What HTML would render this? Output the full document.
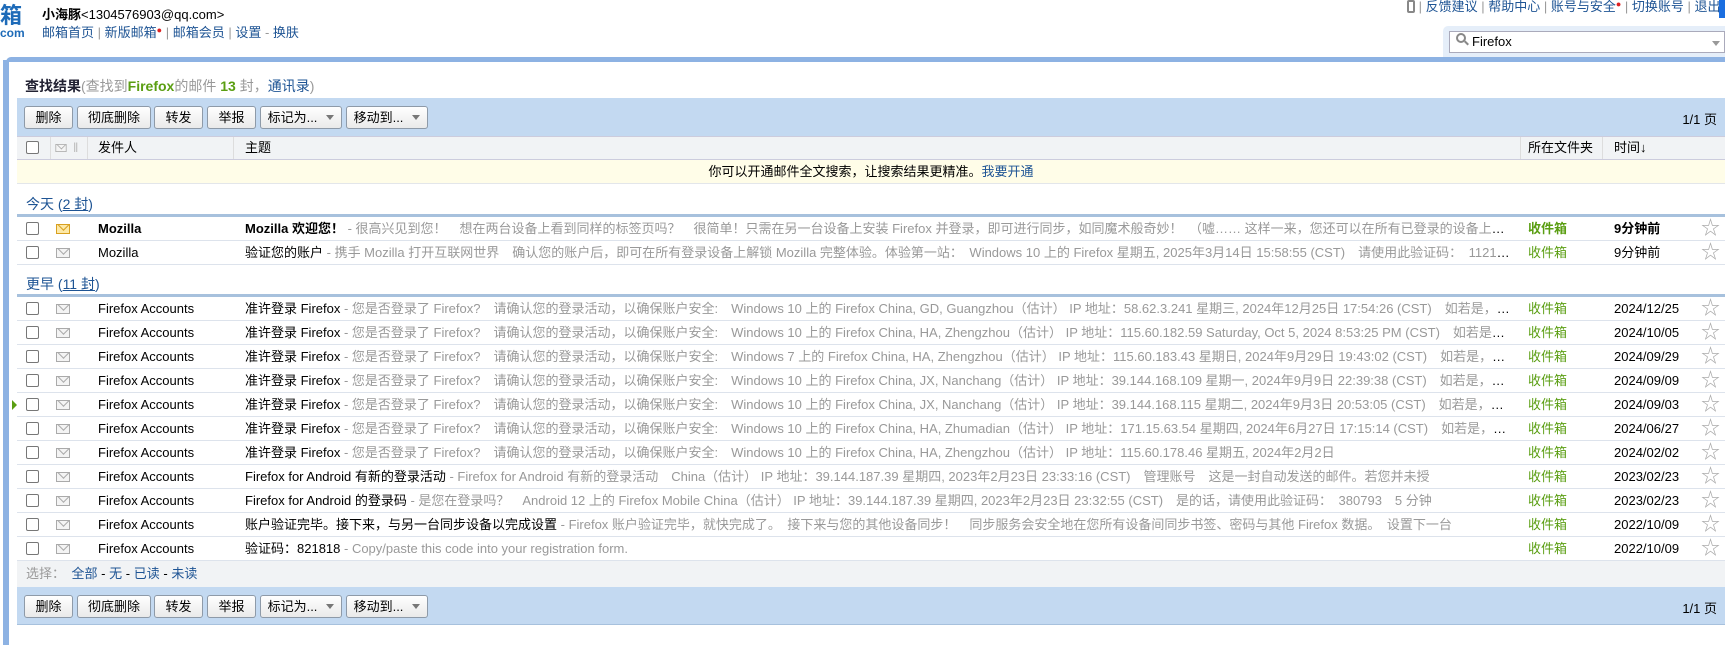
<!DOCTYPE html>
<html><head><meta charset="utf-8"><style>
*{margin:0;padding:0;box-sizing:border-box}
body{width:1725px;height:645px;overflow:hidden;background:#fff;font-family:"Liberation Sans","Noto Sans CJK SC",sans-serif;font-size:13px;color:#000;position:relative}
.a{position:absolute;white-space:nowrap}
a{color:#1e5494;text-decoration:none}
.tb{position:absolute;left:17px;right:0;height:38px;background:#c3d9f1}
.btn{position:absolute;top:8px;height:23px;border:1px solid #8e9aa8;border-radius:3px;background:linear-gradient(#fff,#eaeaea);font-size:13px;line-height:21px;text-align:center;color:#000}
.btn i{display:inline-block;width:0;height:0;border-left:4px solid transparent;border-right:4px solid transparent;border-top:5px solid #777;margin-left:9px;vertical-align:2px}
.row{position:absolute;left:17px;right:0;height:24px;border-bottom:1px solid #dde3ec;line-height:23px;white-space:nowrap}
.cb{position:absolute;left:9px;top:5px;width:13px;height:13px;border:1px solid #777;border-radius:2px;background:#fff}
.env{position:absolute;left:39px;top:7px;width:14px;height:10px;border:1px solid #aaa;background:#f4f4f4;overflow:hidden}
.env:after{content:"";position:absolute;left:2px;top:-5px;width:8px;height:8px;border-right:1px solid #aaa;border-bottom:1px solid #aaa;transform:rotate(45deg)}
.env.n{border-color:#d8a020;background:#fde9a8}
.env.n:after{border-color:#d8a020}
.snd{position:absolute;left:81px}
.sub{position:absolute;left:228px;width:1270px;overflow:hidden;text-overflow:ellipsis}
.sub span{color:#999}
.fld{position:absolute;left:1511px;color:#5a9e12}
.tm{position:absolute;left:1597px}
.st{position:absolute;left:1684px;color:#aaa;font-size:19px;top:0}
.b{font-weight:bold}
.grp{position:absolute;left:26px;font-size:14px;color:#1e5494}
.gl{position:absolute;left:17px;right:0;height:3px;background:#a7c1dd}
</style></head><body>
<div class="a b" style="left:0;top:4px;font-size:22px;color:#1e6bb8;line-height:24px">箱</div>
<div class="a b" style="left:0;top:26px;font-size:12px;color:#1e6bb8">com</div>
<div class="a" style="left:42px;top:4px"><b>小海豚</b>&lt;1304576903@qq.com&gt;</div>
<div class="a" style="left:42px;top:22px;color:#999"><a>邮箱首页</a> | <a>新版邮箱</a><span style="color:#d22;font-size:9px;vertical-align:4px">●</span> | <a>邮箱会员</a> | <a>设置</a> - <a>换肤</a></div>
<div class="a" style="left:1407px;top:-4px;color:#999;font-size:13px"><span style="display:inline-block;width:8px;height:13px;border:2px solid #888;border-radius:2px;vertical-align:-2px"></span> | <a>反馈建议</a> | <a>帮助中心</a> | <a>账号与安全</a><span style="color:#d22;font-size:9px;vertical-align:4px">●</span> | <a>切换账号</a> | <a>退出</a></div>
<div class="a" style="left:1719px;top:0;width:6px;height:18px;background:#1a6ee0"></div>
<div class="a" style="left:1443px;top:26px;width:282px;height:32px;background:#e5eef9;border-radius:5px 0 0 0"></div>
<div class="a" style="left:1449px;top:31px;width:276px;height:22px;background:#fff;border:1px solid #aab"></div>
<div class="a" style="left:1456px;top:33px;width:10px;height:10px;border:2px solid #888;border-radius:50%"></div>
<div class="a" style="left:1464px;top:42px;width:5px;height:2px;background:#888;transform:rotate(45deg)"></div>
<div class="a" style="left:1472px;top:34px;font-size:13px">Firefox</div>
<div class="a" style="left:1712px;top:41px;border-left:4px solid transparent;border-right:4px solid transparent;border-top:5px solid #999"></div>
<div class="a" style="left:6px;top:57px;right:0;height:5px;background:#8db2e3;border-radius:6px 0 0 0"></div>
<div class="a" style="left:3px;top:60px;width:6px;height:585px;background:#8db2e3"></div>
<div class="a" style="left:25px;top:76px;font-size:14px"><b style="color:#223">查找结果</b><span style="color:#999">(查找到<b style="color:#5a9e12">Firefox</b>的邮件 <b style="color:#5a9e12">13</b> 封，<a>通讯录</a>)</span></div>
<div class="tb" style="top:98px">
<div class="btn" style="left:7px;width:49px">删除</div>
<div class="btn" style="left:60px;width:74px">彻底删除</div>
<div class="btn" style="left:137px;width:49px">转发</div>
<div class="btn" style="left:190px;width:49px">举报</div>
<div class="btn" style="left:243px;width:82px">标记为...<i></i></div>
<div class="btn" style="left:329px;width:82px">移动到...<i></i></div>
<div class="a" style="right:8px;top:11px">1/1 页</div>
</div>
<div class="a" style="left:17px;right:0;top:136px;height:24px;background:#f1f3f5;border-top:1px solid #ccd;border-bottom:1px solid #ccd;line-height:22px">
<div class="cb" style="top:4px"></div>
<div class="a" style="left:33px;top:0;height:22px;border-left:1px solid #ddd"></div>
<div class="env" style="top:6px;transform:scale(.8);left:37px"></div><div class="a" style="left:56px;color:#bbb">‖</div>
<div class="a" style="left:70px;top:0;height:22px;border-left:1px solid #ddd"></div>
<div class="snd">发件人</div>
<div class="a" style="left:216px;top:0;height:22px;border-left:1px solid #ddd"></div>
<div class="sub">主题</div>
<div class="a" style="left:1503px;top:0;height:22px;border-left:1px solid #ddd"></div>
<div class="fld" style="color:#000">所在文件夹</div>
<div class="a" style="left:1585px;top:0;height:22px;border-left:1px solid #ddd"></div>
<div class="tm">时间↓</div>
</div>
<div class="a" style="left:17px;right:0;top:160px;height:24px;background:#fffde8;border-bottom:1px solid #e3e6ea;text-align:center;line-height:23px">你可以开通邮件全文搜索，让搜索结果更精准。<a>我要开通</a></div>
<div class="grp" style="top:194px">今天 (<u>2 封</u>)</div>
<div class="gl" style="top:214px"></div>
<div class="row" style="top:217px"><div class="cb"></div><div class="env n"></div><div class="snd b">Mozilla</div><div class="sub"><b>Mozilla 欢迎您！</b><span> - 很高兴见到您！　想在两台设备上看到同样的标签页吗？　很简单！只需在另一台设备上安装 Firefox 并登录，即可进行同步，如同魔术般奇妙！　（嘘…… 这样一来，您还可以在所有已登录的设备上获取书签、密码和其他数据）</span></div><div class="fld b">收件箱</div><div class="tm b">9分钟前</div><div class="st">☆</div></div>
<div class="row" style="top:241px"><div class="cb"></div><div class="env"></div><div class="snd">Mozilla</div><div class="sub">验证您的账户<span> - 携手 Mozilla 打开互联网世界　确认您的账户后，即可在所有登录设备上解锁 Mozilla 完整体验。体验第一站：　Windows 10 上的 Firefox 星期五, 2025年3月14日 15:58:55 (CST)　请使用此验证码：　112147　...</span></div><div class="fld">收件箱</div><div class="tm">9分钟前</div><div class="st">☆</div></div>
<div class="grp" style="top:274px">更早 (<u>11 封</u>)</div>
<div class="gl" style="top:294px"></div>
<div class="row" style="top:297px"><div class="cb"></div><div class="env"></div><div class="snd">Firefox Accounts</div><div class="sub">准许登录 Firefox<span> - 您是否登录了 Firefox?　请确认您的登录活动，以确保账户安全:　Windows 10 上的 Firefox China, GD, Guangzhou（估计）  IP 地址：58.62.3.241 星期三, 2024年12月25日 17:54:26 (CST)　如若是，请忽略此邮件</span></div><div class="fld">收件箱</div><div class="tm">2024/12/25</div><div class="st">☆</div></div>
<div class="row" style="top:321px"><div class="cb"></div><div class="env"></div><div class="snd">Firefox Accounts</div><div class="sub">准许登录 Firefox<span> - 您是否登录了 Firefox?　请确认您的登录活动，以确保账户安全:　Windows 10 上的 Firefox China, HA, Zhengzhou（估计）  IP 地址：115.60.182.59 Saturday, Oct 5, 2024 8:53:25 PM (CST)　如若是，请忽略</span></div><div class="fld">收件箱</div><div class="tm">2024/10/05</div><div class="st">☆</div></div>
<div class="row" style="top:345px"><div class="cb"></div><div class="env"></div><div class="snd">Firefox Accounts</div><div class="sub">准许登录 Firefox<span> - 您是否登录了 Firefox?　请确认您的登录活动，以确保账户安全:　Windows 7 上的 Firefox China, HA, Zhengzhou（估计）  IP 地址：115.60.183.43 星期日, 2024年9月29日 19:43:02 (CST)　如若是，请忽略此邮件</span></div><div class="fld">收件箱</div><div class="tm">2024/09/29</div><div class="st">☆</div></div>
<div class="row" style="top:369px"><div class="cb"></div><div class="env"></div><div class="snd">Firefox Accounts</div><div class="sub">准许登录 Firefox<span> - 您是否登录了 Firefox?　请确认您的登录活动，以确保账户安全:　Windows 10 上的 Firefox China, JX, Nanchang（估计）  IP 地址：39.144.168.109 星期一, 2024年9月9日 22:39:38 (CST)　如若是，请忽略此邮件</span></div><div class="fld">收件箱</div><div class="tm">2024/09/09</div><div class="st">☆</div></div>
<div class="row" style="top:393px"><div class="a" style="left:-5px;top:7px;border-top:5px solid transparent;border-bottom:5px solid transparent;border-left:5px solid #5a9e12"></div><div class="cb"></div><div class="env"></div><div class="snd">Firefox Accounts</div><div class="sub">准许登录 Firefox<span> - 您是否登录了 Firefox?　请确认您的登录活动，以确保账户安全:　Windows 10 上的 Firefox China, JX, Nanchang（估计）  IP 地址：39.144.168.115 星期二, 2024年9月3日 20:53:05 (CST)　如若是，请忽略此邮件</span></div><div class="fld">收件箱</div><div class="tm">2024/09/03</div><div class="st">☆</div></div>
<div class="row" style="top:417px"><div class="cb"></div><div class="env"></div><div class="snd">Firefox Accounts</div><div class="sub">准许登录 Firefox<span> - 您是否登录了 Firefox?　请确认您的登录活动，以确保账户安全:　Windows 10 上的 Firefox China, HA, Zhumadian（估计）  IP 地址：171.15.63.54 星期四, 2024年6月27日 17:15:14 (CST)　如若是，请忽略此邮件</span></div><div class="fld">收件箱</div><div class="tm">2024/06/27</div><div class="st">☆</div></div>
<div class="row" style="top:441px"><div class="cb"></div><div class="env"></div><div class="snd">Firefox Accounts</div><div class="sub">准许登录 Firefox<span> - 您是否登录了 Firefox?　请确认您的登录活动，以确保账户安全:　Windows 10 上的 Firefox China, HA, Zhengzhou（估计）  IP 地址：115.60.178.46 星期五, 2024年2月2日</span></div><div class="fld">收件箱</div><div class="tm">2024/02/02</div><div class="st">☆</div></div>
<div class="row" style="top:465px"><div class="cb"></div><div class="env"></div><div class="snd">Firefox Accounts</div><div class="sub">Firefox for Android 有新的登录活动<span> - Firefox for Android 有新的登录活动　China（估计）  IP 地址：39.144.187.39 星期四, 2023年2月23日 23:33:16 (CST)　管理账号　这是一封自动发送的邮件。若您并未授</span></div><div class="fld">收件箱</div><div class="tm">2023/02/23</div><div class="st">☆</div></div>
<div class="row" style="top:489px"><div class="cb"></div><div class="env"></div><div class="snd">Firefox Accounts</div><div class="sub">Firefox for Android 的登录码<span> - 是您在登录吗？　Android 12 上的 Firefox Mobile China（估计）  IP 地址：39.144.187.39 星期四, 2023年2月23日 23:32:55 (CST)　是的话，请使用此验证码：　380793　5 分钟</span></div><div class="fld">收件箱</div><div class="tm">2023/02/23</div><div class="st">☆</div></div>
<div class="row" style="top:513px"><div class="cb"></div><div class="env"></div><div class="snd">Firefox Accounts</div><div class="sub">账户验证完毕。接下来，与另一台同步设备以完成设置<span> - Firefox 账户验证完毕，就快完成了。　接下来与您的其他设备同步！　同步服务会安全地在您所有设备间同步书签、密码与其他 Firefox 数据。　设置下一台</span></div><div class="fld">收件箱</div><div class="tm">2022/10/09</div><div class="st">☆</div></div>
<div class="row" style="top:537px"><div class="cb"></div><div class="env"></div><div class="snd">Firefox Accounts</div><div class="sub">验证码：821818<span> - Copy/paste this code into your registration form.</span></div><div class="fld">收件箱</div><div class="tm">2022/10/09</div><div class="st">☆</div></div>
<div class="a" style="left:17px;right:0;top:561px;height:26px;background:#f1f3f5;line-height:26px;padding-left:9px;color:#999">选择：　<a>全部</a> <span style="color:#000">-</span> <a>无</a> <span style="color:#000">-</span> <a>已读</a> <span style="color:#000">-</span> <a>未读</a></div>
<div class="tb" style="top:587px;border-bottom:1px solid #a7c1dd">
<div class="btn" style="left:7px;width:49px">删除</div>
<div class="btn" style="left:60px;width:74px">彻底删除</div>
<div class="btn" style="left:137px;width:49px">转发</div>
<div class="btn" style="left:190px;width:49px">举报</div>
<div class="btn" style="left:243px;width:82px">标记为...<i></i></div>
<div class="btn" style="left:329px;width:82px">移动到...<i></i></div>
<div class="a" style="right:8px;top:11px">1/1 页</div>
</div>
</body></html>
